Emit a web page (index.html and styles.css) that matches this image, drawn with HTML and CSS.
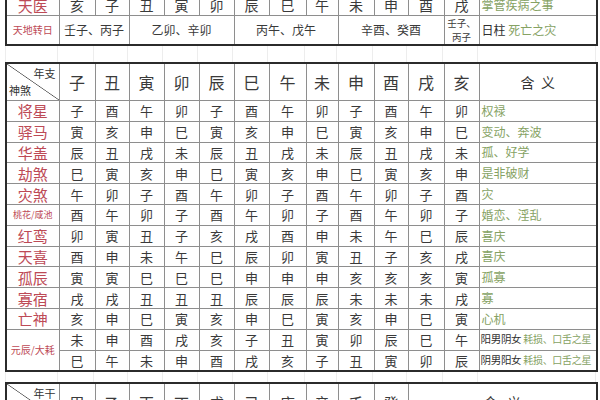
FILE: index.html
```html
<!DOCTYPE html>
<html lang="zh-CN">
<head>
<meta charset="utf-8">
<title>神煞表</title>
<link rel="stylesheet" href="styles.css">
</head>
<body>
<div class="page">
  <table class="grid t1">
    <colgroup>
      <col class="w53"><col class="w36"><col class="w34"><col class="w35"><col class="w35"><col class="w35"><col class="w35"><col class="w37"><col class="w32"><col class="w36"><col class="w34"><col class="w36"><col class="w35"><col class="w118">
    </colgroup>
    <tr class="r-top">
      <td class="lab">天医</td>
      <td>亥</td><td>子</td><td>丑</td><td>寅</td><td>卯</td><td>辰</td><td>巳</td><td>午</td><td>未</td><td>申</td><td>酉</td><td>戌</td>
      <td class="mean">掌管疾病之事</td>
    </tr>
    <tr class="r-turn">
      <td class="lab small">天地转日</td>
      <td colspan="2" class="sm">壬子、丙子</td>
      <td colspan="3" class="sm">乙卯、辛卯</td>
      <td colspan="3" class="sm">丙午、戊午</td>
      <td colspan="3" class="sm">辛酉、癸酉</td>
      <td class="two"><span class="ln">壬子、</span><span class="ln">丙子</span></td>
      <td class="mean"><span class="blk">日柱</span> 死亡之灾</td>
    </tr>
  </table>

  <div class="gap g1">
    <span class="w53"></span><span class="w36"></span><span class="w34"></span><span class="w35"></span><span class="w35"></span><span class="w35"></span><span class="w35"></span><span class="w37"></span><span class="w32"></span><span class="w36"></span><span class="w34"></span><span class="w36"></span><span class="w35"></span><span class="w118"></span>
  </div>

  <table class="grid t2">
    <colgroup>
      <col class="w53"><col class="w36"><col class="w34"><col class="w35"><col class="w35"><col class="w35"><col class="w35"><col class="w37"><col class="w32"><col class="w36"><col class="w34"><col class="w36"><col class="w35"><col class="w118">
    </colgroup>
    <tr class="head">
      <td class="diag"><div class="diag-in"><span class="dr">年支</span><span class="dl">神煞</span></div></td>
      <td>子</td><td>丑</td><td>寅</td><td>卯</td><td>辰</td><td>巳</td><td>午</td><td>未</td><td>申</td><td>酉</td><td>戌</td><td>亥</td>
      <td class="hmean">含&nbsp;&nbsp;义</td>
    </tr>
    <tr><td class="lab">将星</td><td>子</td><td>酉</td><td>午</td><td>卯</td><td>子</td><td>酉</td><td>午</td><td>卯</td><td>子</td><td>酉</td><td>午</td><td>卯</td><td class="mean">权禄</td></tr>
    <tr><td class="lab">驿马</td><td>寅</td><td>亥</td><td>申</td><td>巳</td><td>寅</td><td>亥</td><td>申</td><td>巳</td><td>寅</td><td>亥</td><td>申</td><td>巳</td><td class="mean">变动、奔波</td></tr>
    <tr><td class="lab">华盖</td><td>辰</td><td>丑</td><td>戌</td><td>未</td><td>辰</td><td>丑</td><td>戌</td><td>未</td><td>辰</td><td>丑</td><td>戌</td><td>未</td><td class="mean">孤、好学</td></tr>
    <tr><td class="lab">劫煞</td><td>巳</td><td>寅</td><td>亥</td><td>申</td><td>巳</td><td>寅</td><td>亥</td><td>申</td><td>巳</td><td>寅</td><td>亥</td><td>申</td><td class="mean">是非破财</td></tr>
    <tr><td class="lab">灾煞</td><td>午</td><td>卯</td><td>子</td><td>酉</td><td>午</td><td>卯</td><td>子</td><td>酉</td><td>午</td><td>卯</td><td>子</td><td>酉</td><td class="mean">灾</td></tr>
    <tr><td class="lab tiny">桃花/咸池</td><td>酉</td><td>午</td><td>卯</td><td>子</td><td>酉</td><td>午</td><td>卯</td><td>子</td><td>酉</td><td>午</td><td>卯</td><td>子</td><td class="mean">婚恋、淫乱</td></tr>
    <tr><td class="lab">红鸾</td><td>卯</td><td>寅</td><td>丑</td><td>子</td><td>亥</td><td>戌</td><td>酉</td><td>申</td><td>未</td><td>午</td><td>巳</td><td>辰</td><td class="mean">喜庆</td></tr>
    <tr><td class="lab">天喜</td><td>酉</td><td>申</td><td>未</td><td>午</td><td>巳</td><td>辰</td><td>卯</td><td>寅</td><td>丑</td><td>子</td><td>亥</td><td>戌</td><td class="mean">喜庆</td></tr>
    <tr><td class="lab">孤辰</td><td>寅</td><td>寅</td><td>巳</td><td>巳</td><td>巳</td><td>申</td><td>申</td><td>申</td><td>亥</td><td>亥</td><td>亥</td><td>寅</td><td class="mean">孤寡</td></tr>
    <tr><td class="lab">寡宿</td><td>戌</td><td>戌</td><td>丑</td><td>丑</td><td>丑</td><td>辰</td><td>辰</td><td>辰</td><td>未</td><td>未</td><td>未</td><td>戌</td><td class="mean">寡</td></tr>
    <tr><td class="lab">亡神</td><td>亥</td><td>申</td><td>巳</td><td>寅</td><td>亥</td><td>申</td><td>巳</td><td>寅</td><td>亥</td><td>申</td><td>巳</td><td>寅</td><td class="mean">心机</td></tr>
    <tr><td class="lab tiny2" rowspan="2">元辰/大耗</td><td>未</td><td>申</td><td>酉</td><td>戌</td><td>亥</td><td>子</td><td>丑</td><td>寅</td><td>卯</td><td>辰</td><td>巳</td><td>午</td><td class="mean m2"><span class="blk">阳男阴女</span> 耗损、口舌之星</td></tr>
    <tr><td>巳</td><td>午</td><td>未</td><td>申</td><td>酉</td><td>戌</td><td>亥</td><td>子</td><td>丑</td><td>寅</td><td>卯</td><td>辰</td><td class="mean m2"><span class="blk">阴男阳女</span> 耗损、口舌之星</td></tr>
  </table>

  <div class="gap g2">
    <span class="w53"></span><span class="w36"></span><span class="w34"></span><span class="w35"></span><span class="w35"></span><span class="w35"></span><span class="w35"></span><span class="w37"></span><span class="w32"></span><span class="w36"></span><span class="w34"></span><span class="w36"></span><span class="w35"></span><span class="w118"></span>
  </div>

  <table class="grid t3">
    <colgroup>
      <col class="w53"><col class="w36"><col class="w34"><col class="w35"><col class="w35"><col class="w35"><col class="w35"><col class="w37"><col class="w32"><col class="w36"><col class="w34"><col class="w189">
    </colgroup>
    <tr class="head">
      <td class="diag"><div class="diag-in"><span class="dr">年干</span><span class="dl">神煞</span></div></td>
      <td>甲</td><td>乙</td><td>丙</td><td>丁</td><td>戊</td><td>己</td><td>庚</td><td>辛</td><td>壬</td><td>癸</td>
      <td class="hmean">含&nbsp;&nbsp;&nbsp;义</td>
    </tr>
  </table>
</div>
</body>
</html>
```

FILE: styles.css
```css
html, body {
  margin: 0;
  padding: 0;
  background: #ffffff;
}

body {
  font-family: "Noto Sans CJK SC", "Noto Sans", sans-serif;
  color: #333;
  width: 600px;
  height: 400px;
  overflow: hidden;
}

.page {
  padding-left: 5px;
  width: 591px;
}

.w53 { width: 53px; }
.w36 { width: 36px; }
.w34 { width: 34px; }
.w35 { width: 35px; }
.w37 { width: 37px; }
.w32 { width: 32px; }
.w118 { width: 118px; }
.w189 { width: 189px; }

.grid {
  border-collapse: collapse;
  table-layout: fixed;
  width: 591px;
  border: 2px solid #2b2b2b;
}

.grid td {
  border: 1px solid #8e8e8e;
  padding: 0;
  text-align: center;
  vertical-align: middle;
  font-size: 13px;
  line-height: 1;
  color: #3a3a3a;
  overflow: hidden;
  white-space: nowrap;
}

/* top table */
.t1 {
  margin-top: -7px;
}

.t1 .r-top td {
  height: 20px;
  font-size: 14px;
}

.t1 .r-turn td {
  height: 28px;
}

.t1 .sm {
  font-size: 12px;
}

.grid td.two {
  font-size: 9.5px;
  line-height: 14px;
}

.two .ln {
  display: block;
}

.grid td.lab {
  color: #bd4a56;
  font-size: 15px;
}

.grid td.lab.small {
  font-size: 10px;
}

.grid td.lab.tiny {
  font-size: 9px;
}

.grid td.lab.tiny2 {
  font-size: 10px;
}

.grid td.mean {
  text-align: left;
  padding-left: 2px;
  color: #86a263;
  font-size: 12px;
}

.grid td.mean.m2 {
  font-size: 10px;
  letter-spacing: -0.3px;
  padding-left: 1px;
}

.m2 .blk {
  font-size: 10.5px;
}

.blk {
  color: #2f2f2f;
}

/* faint spreadsheet gridlines between tables */
.gap {
  display: flex;
}

.gap span {
  box-sizing: border-box;
  border-right: 1px solid #ededed;
  flex: none;
}

.gap span:first-child {
  border-left: 1px solid #ededed;
}

.g1 { height: 16px; }
.g2 { height: 10px; }

/* main table */
.t2 tr td {
  height: 19.8px;
}

.t2 .head td {
  height: 32px;
  font-size: 16px;
}

.t3 .head td {
  height: 32px;
  font-size: 15px;
}

.grid td.hmean {
  font-size: 14px;
  color: #333;
}

.grid td.diag {
  background: linear-gradient(to top right, transparent calc(50% - 0.7px), #555 50%, transparent calc(50% + 0.7px));
  padding: 2px 3px 2px 2px;
}

.diag-in {
  display: flex;
  flex-direction: column;
  justify-content: space-between;
  height: 28px;
  font-size: 11px;
  color: #333;
}

.dr {
  align-self: flex-end;
}

.dl {
  align-self: flex-start;
}
```
